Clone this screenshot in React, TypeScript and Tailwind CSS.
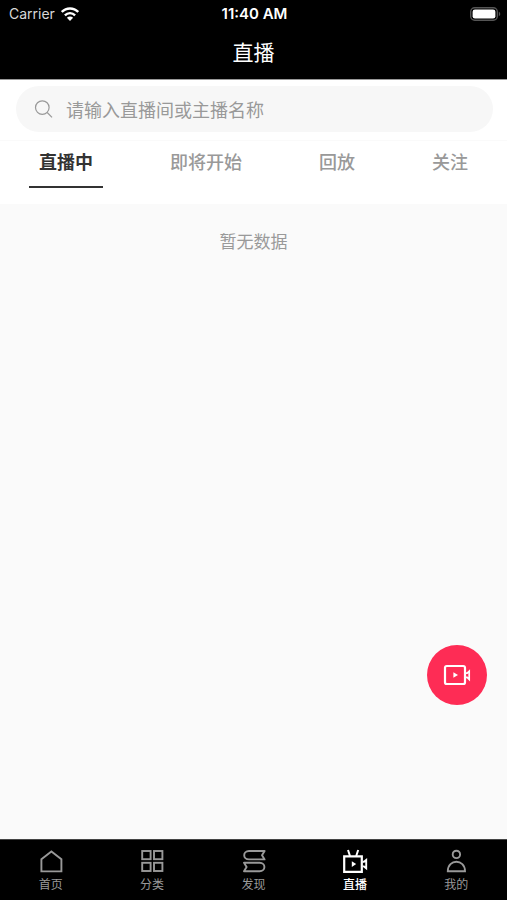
import { useState } from 'react';
import type { ReactNode } from 'react';

const tabs = ['直播中', '即将开始', '回放', '关注'];

function WifiIcon() {
  return (
    <svg width="18" height="14" viewBox="0 0 18 14" fill="none" stroke="#fff" strokeWidth="2.4" aria-hidden="true">
      <path d="M0.8 5C5.3 0.3 12.7 0.3 17.2 5" />
      <path d="M3.9 8.3C6.8 5.4 11.2 5.4 14.1 8.3" />
      <path d="M9 14L5.9 10.8C7.7 9.2 10.3 9.2 12.1 10.8Z" fill="#fff" stroke="none" />
    </svg>
  );
}

function BatteryIcon() {
  return (
    <svg width="31" height="14" viewBox="0 0 31 14" fill="none" aria-hidden="true">
      <rect x="0.7" y="0.7" width="26.6" height="12.6" rx="4" stroke="#555" strokeWidth="1.4" />
      <rect x="2.6" y="2.4" width="22.8" height="9.2" rx="2.4" fill="#fff" />
      <path d="M28.8 4.8C30.7 5.5 30.7 8.5 28.8 9.2Z" fill="#555" />
    </svg>
  );
}

function NavIcon({ children }: { children: ReactNode }) {
  return (
    <svg width="26" height="26" viewBox="0 0 26 26" fill="none" stroke="currentColor" strokeWidth="1.9" aria-hidden="true">
      {children}
    </svg>
  );
}

const navItems = [
  {
    label: '首页',
    icon: <path d="M3.4 11.2L13.4 3.4L23.4 11.2V23.4H3.4Z" />,
  },
  {
    label: '分类',
    icon: (
      <>
        <rect x="3.2" y="3" width="8.4" height="8.2" />
        <rect x="15" y="3" width="8.4" height="8.2" />
        <rect x="3.2" y="14.8" width="8.4" height="8.2" />
        <rect x="15" y="14.8" width="8.4" height="8.2" />
      </>
    ),
  },
  {
    label: '发现',
    icon: (
      <>
        <path d="M23.6 3H8C1.6 3 1.6 11.4 8 11.4H23.6L21 7.2Z" strokeLinejoin="round" />
        <path d="M3 14.8H18.6C25 14.8 25 23.2 18.6 23.2H3L5.6 19Z" strokeLinejoin="round" />
      </>
    ),
  },
  {
    label: '直播',
    icon: (
      <>
        <path d="M2.2 8.4H19.8V23.8H2.2Z" strokeWidth="2.2" />
        <path d="M6 2L8 8M16.2 2L14.2 8" strokeWidth="2" />
        <path d="M20.4 13.8H22L24.2 12V20.2L22 18.4H20.4" />
        <path d="M9.8 13.2L14.2 16.1L9.8 19Z" fill="currentColor" stroke="none" />
      </>
    ),
  },
  {
    label: '我的',
    icon: (
      <>
        <circle cx="13.4" cy="6.4" r="3.7" />
        <path d="M4.8 23.2C4.8 10.6 22 10.6 22 23.2Z" />
      </>
    ),
  },
];

export default function App() {
  const [activeTab, setActiveTab] = useState('直播中');
  const [activePage, setActivePage] = useState('直播');

  return (
    <div className="relative flex min-h-screen flex-col bg-[#fafafa] font-['Noto_Sans_CJK_SC',sans-serif]">
      <header className="border-b border-[#999] bg-black text-white">
        <div className="grid h-7 grid-cols-[1fr_auto_1fr] items-center pr-[6px] pl-2 font-['Inter',sans-serif] text-sm">
          <div className="flex items-center gap-[6px] pl-px text-[#d8d8d8]">
            <span>Carrier</span>
            <WifiIcon />
          </div>
          <span className="text-center text-[15px] font-semibold">11:40 AM</span>
          <div className="flex justify-end">
            <BatteryIcon />
          </div>
        </div>
        <h1 className="h-[51px] text-center text-[21px] leading-[46px] font-normal">直播</h1>
      </header>

      <div className="border-b border-[#fafafa] bg-white pt-[6px] pr-[14px] pb-2 pl-4">
        <label className="flex h-[46px] items-center gap-3 rounded-full bg-[#f7f7f7] px-[18px]">
          <svg width="20" height="20" viewBox="0 0 20 20" fill="none" stroke="#999" strokeWidth="1.2" aria-hidden="true">
            <circle cx="8.3" cy="8.6" r="6.8" />
            <path d="M13.2 13.5L18 18.3" />
          </svg>
          <input
            type="text"
            aria-label="搜索直播"
            placeholder="请输入直播间或主播名称"
            className="min-w-0 flex-1 bg-transparent text-lg text-[#333] outline-none placeholder:text-[#999]"
          />
        </label>
      </div>

      <nav className="flex h-[63px] items-start justify-between bg-white px-[29px]">
        {tabs.map((tab) => (
          <button
            key={tab}
            type="button"
            onClick={() => setActiveTab(tab)}
            className={
              activeTab === tab
                ? 'h-[47px] border-b-2 border-[#333] px-[10px] pb-[6px] text-lg font-bold text-[#333]'
                : 'h-[47px] border-b-2 border-transparent px-[10px] pb-[6px] text-lg font-medium text-[#999]'
            }
          >
            {tab}
          </button>
        ))}
      </nav>

      <main className="flex-1 pt-6">
        <p className="text-center text-[17px] leading-[26px] text-[#999]">暂无数据</p>
      </main>

      <button
        type="button"
        aria-label="开始直播"
        className="absolute right-5 bottom-[195px] flex size-[60px] items-center justify-center rounded-full bg-[#fe2c55] text-white"
      >
        <svg width="28" height="24" viewBox="0 0 28 24" fill="none" stroke="currentColor" strokeWidth="2.2" aria-hidden="true">
          <rect x="2" y="3" width="20" height="18" rx="1.8" />
          <path d="M22.4 10.2H24.2L26.2 8.2V16.4L24.2 14.4H22.4" strokeWidth="1.7" />
          <path d="M10.4 9.2L15 12L10.4 14.8Z" fill="currentColor" stroke="none" />
        </svg>
      </button>

      <nav className="flex h-[61px] border-t border-[#444] bg-black">
        {navItems.map((item) => (
          <button
            key={item.label}
            type="button"
            onClick={() => setActivePage(item.label)}
            className={
              activePage === item.label
                ? 'flex flex-1 flex-col items-center pt-2 text-xs font-medium text-white'
                : 'flex flex-1 flex-col items-center pt-2 text-xs text-[#999]'
            }
          >
            <NavIcon>{item.icon}</NavIcon>
            <span className="mt-[2px]">{item.label}</span>
          </button>
        ))}
      </nav>
    </div>
  );
}
